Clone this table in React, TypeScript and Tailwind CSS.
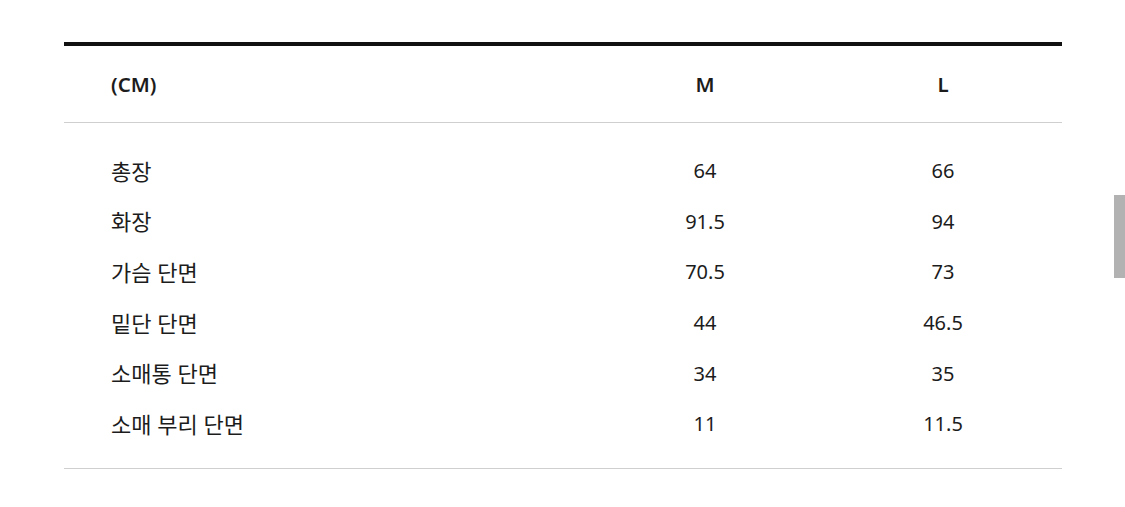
const rows: [string, string, string][] = [
  ["총장", "64", "66"],
  ["화장", "91.5", "94"],
  ["가슴 단면", "70.5", "73"],
  ["밑단 단면", "44", "46.5"],
  ["소매통 단면", "34", "35"],
  ["소매 부리 단면", "11", "11.5"],
];

const font = { fontFamily: '"Noto Sans", "Noto Sans CJK KR", sans-serif' };

export default function App() {
  return (
    <div className="relative w-[1125px] h-[507px] bg-white text-[#1c1c1c]" style={font}>
      <div className="pt-[42px] pl-[64px] w-[1062px]">
        <div className="w-[998px] border-t-4 border-[#111]">
          <div className="grid grid-cols-[522px_238px_238px] h-[77px] items-center border-b border-[#cfcfcf] text-[20.5px] font-semibold">
            <div className="pl-[47px]">(CM)</div>
            <div className="text-center">M</div>
            <div className="text-center">L</div>
          </div>
          <div className="pt-[23px] pb-[18px] border-b border-[#cfcfcf]">
            {rows.map(([label, m, l]) => (
              <div key={label} className="grid grid-cols-[522px_238px_238px] h-[50.6px] items-center text-[20px]">
                <div className="pl-[47px] text-[22px]">{label}</div>
                <div className="text-center">{m}</div>
                <div className="text-center">{l}</div>
              </div>
            ))}
          </div>
        </div>
      </div>
      <div className="absolute left-[1114px] top-[195px] w-[11px] h-[83px] bg-[#b2b2b2]" />
    </div>
  );
}
